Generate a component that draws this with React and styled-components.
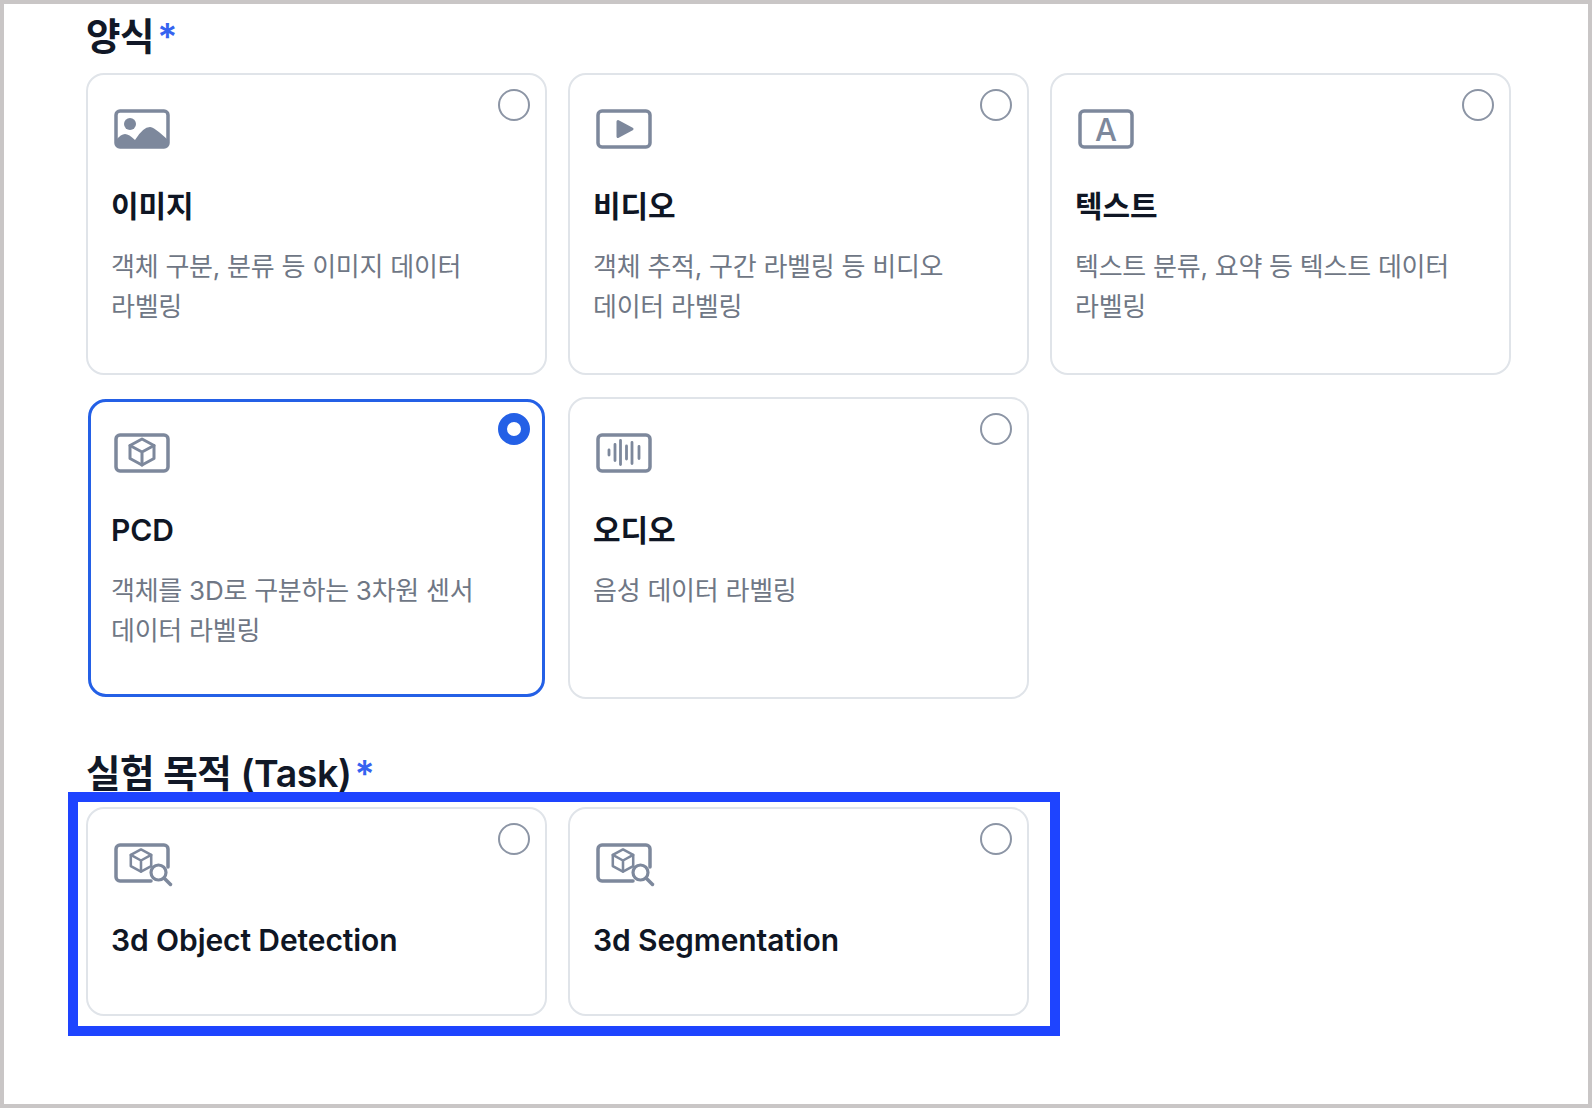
import React from 'react';
import styled, { createGlobalStyle } from 'styled-components';

const GlobalStyle = createGlobalStyle`
  html, body {
    margin: 0;
    padding: 0;
    background: #fff;
  }
  body {
    font-family: Inter, "Noto Sans CJK KR", "Noto Sans", sans-serif;
  }
`;

const Page = styled.div`
  box-sizing: border-box;
  width: 1592px;
  height: 1108px;
  border: 4px solid #c9c6c6;
  padding: 11px 0 0 82px;
  overflow: hidden;
  background: #fff;
`;

const Section = styled.section`
  margin-top: ${({ $top = 0 }) => $top}px;
`;

const Heading = styled.h2`
  margin: 0 0 ${({ $gap }) => $gap}px;
  height: 44px;
  font-size: 37.5px;
  line-height: 44px;
  font-weight: 600;
  letter-spacing: -0.4px;
  color: #111827;
  white-space: nowrap;
`;

const Required = styled.span`
  margin-left: 3px;
  color: #3563f0;
  font-weight: 600;
`;

const CardGrid = styled.div`
  display: grid;
  grid-template-columns: repeat(3, 461px);
  grid-auto-rows: ${({ $rowHeight }) => $rowHeight}px;
  gap: 22px 21px;
`;

// annotation drawn over the task cards
const Highlighted = styled.div`
  position: relative;

  &::after {
    content: '';
    position: absolute;
    left: -18px;
    top: -15px;
    width: 992px;
    height: 244px;
    box-sizing: border-box;
    border: 10px solid #1e44ff;
    pointer-events: none;
  }
`;

const Card = styled.label`
  position: relative;
  display: flex;
  flex-direction: column;
  box-sizing: border-box;
  margin: ${({ $selected }) => ($selected ? '2px' : '0')};
  padding: ${({ $selected }) => ($selected ? '31px 20px 0 20px' : '34px 23px 0 23px')};
  border: ${({ $selected }) => ($selected ? '3px solid #2460e6' : '2px solid #e0e4e9')};
  border-radius: 18px;
  background: #fff;
`;

const Radio = styled.span`
  position: absolute;
  top: ${({ $selected }) => ($selected ? '11px' : '14px')};
  right: ${({ $selected }) => ($selected ? '12px' : '15px')};
  box-sizing: border-box;
  width: 32px;
  height: 32px;
  border-radius: 50%;
  border: ${({ $selected }) => ($selected ? '9.5px solid #2460e6' : '2px solid #8c95a5')};
  background: #fff;
`;

const IconWrap = styled.div`
  display: flex;
  width: 60px;
  height: 44px;
  margin-left: 3px;
  color: #7d889c;
`;

const Title = styled.div`
  margin-top: 33px;
  font-size: 30px;
  line-height: 40px;
  font-weight: 600;
  letter-spacing: -0.1px;
  color: #0f1624;
`;

const Description = styled.p`
  margin: 21px 0 0;
  font-size: 26px;
  line-height: 40px;
  font-weight: 400;
  letter-spacing: -0.25px;
  word-break: keep-all;
  color: #6f7785;
`;

const Svg = ({ children }) => (
  <svg width="60" height="44" viewBox="0 0 60 44" fill="none" stroke="currentColor" strokeWidth="3.5" strokeLinecap="round" strokeLinejoin="round">
    {children}
  </svg>
);

const cube = (
  <>
    <path d="M28 7l12 6.500v13L28 33l-12-6.500v-13z" strokeWidth="3" />
    <path d="M16 13.500l12 6.500 12-6.500M28 20v13" strokeWidth="3" />
  </>
);

const ImageIcon = () => (
  <Svg>
    <rect x="2" y="2" width="52" height="36" rx="4" />
    <circle cx="16" cy="15" r="6" fill="currentColor" stroke="none" />
    <path d="M2 31Q7 25 11 25Q15 25 21 31Q29 18 36 18Q40 18 54 31V36a2 2 0 0 1-2 2H4a2 2 0 0 1-2-2z" fill="currentColor" stroke="none" />
  </Svg>
);

const VideoIcon = () => (
  <Svg>
    <rect x="2" y="2" width="52" height="36" rx="4" />
    <path d="M22 12.500l14 7.500-14 7.500z" fill="currentColor" strokeWidth="3" />
  </Svg>
);

const LetterGlyph = styled.text`
  font-family: Inter, sans-serif;
  font-size: 31px;
  font-weight: 500;
  fill: currentColor;
  stroke: none;
`;

const TextIcon = () => (
  <Svg>
    <rect x="2" y="2" width="52" height="36" rx="4" />
    <LetterGlyph x="28" y="31.500" textAnchor="middle">A</LetterGlyph>
  </Svg>
);

const CubeIcon = () => (
  <Svg>
    <rect x="2" y="2" width="52" height="36" rx="4" />
    <g transform="translate(0 -1)">{cube}</g>
  </Svg>
);

const AudioIcon = () => (
  <Svg>
    <rect x="2" y="2" width="52" height="36" rx="4" />
    <path d="M13 17v5M19 11.500v16M24.500 7.500v24M30.500 13v13M36 9.500v21M43 13.500v12" strokeWidth="2.8" />
  </Svg>
);

const CubeSearchIcon = () => (
  <Svg>
    <path d="M37 38H6a4 4 0 0 1-4-4V6a4 4 0 0 1 4-4h44a4 4 0 0 1 4 4v18" />
    <g transform="translate(27 17.500) scale(.85) translate(-28 -20)">{cube}</g>
    <circle cx="44.500" cy="29.500" r="7.500" strokeWidth="3.200" fill="#fff" />
    <path d="M50 35l6.500 6.500" strokeWidth="3.500" />
  </Svg>
);

const formats = [
  { title: '이미지', desc: '객체 구분, 분류 등 이미지 데이터 라벨링', Icon: ImageIcon },
  { title: '비디오', desc: '객체 추적, 구간 라벨링 등 비디오 데이터 라벨링', Icon: VideoIcon },
  { title: '텍스트', desc: '텍스트 분류, 요약 등 텍스트 데이터 라벨링', Icon: TextIcon },
  { title: 'PCD', desc: '객체를 3D로 구분하는 3차원 센서 데이터 라벨링', Icon: CubeIcon, selected: true },
  { title: '오디오', desc: '음성 데이터 라벨링', Icon: AudioIcon },
];

const tasks = [
  { title: '3d Object Detection', Icon: CubeSearchIcon },
  { title: '3d Segmentation', Icon: CubeSearchIcon },
];

const OptionCard = ({ title, desc, Icon, selected }) => (
  <Card $selected={selected}>
    <Radio $selected={selected} />
    <IconWrap>
      <Icon />
    </IconWrap>
    <Title>{title}</Title>
    {desc && <Description>{desc}</Description>}
  </Card>
);

export default function App() {
  return (
    <>
      <GlobalStyle />
      <Page>
        <Section>
          <Heading $gap={14}>
            양식<Required>*</Required>
          </Heading>
          <CardGrid $rowHeight={302}>
            {formats.map((item) => (
              <OptionCard key={item.title} {...item} />
            ))}
          </CardGrid>
        </Section>
        <Section $top={53}>
          <Heading $gap={11}>
            실험 목적 (Task)<Required>*</Required>
          </Heading>
          <Highlighted>
            <CardGrid $rowHeight={209}>
              {tasks.map((item) => (
                <OptionCard key={item.title} {...item} />
              ))}
            </CardGrid>
          </Highlighted>
        </Section>
      </Page>
    </>
  );
}
